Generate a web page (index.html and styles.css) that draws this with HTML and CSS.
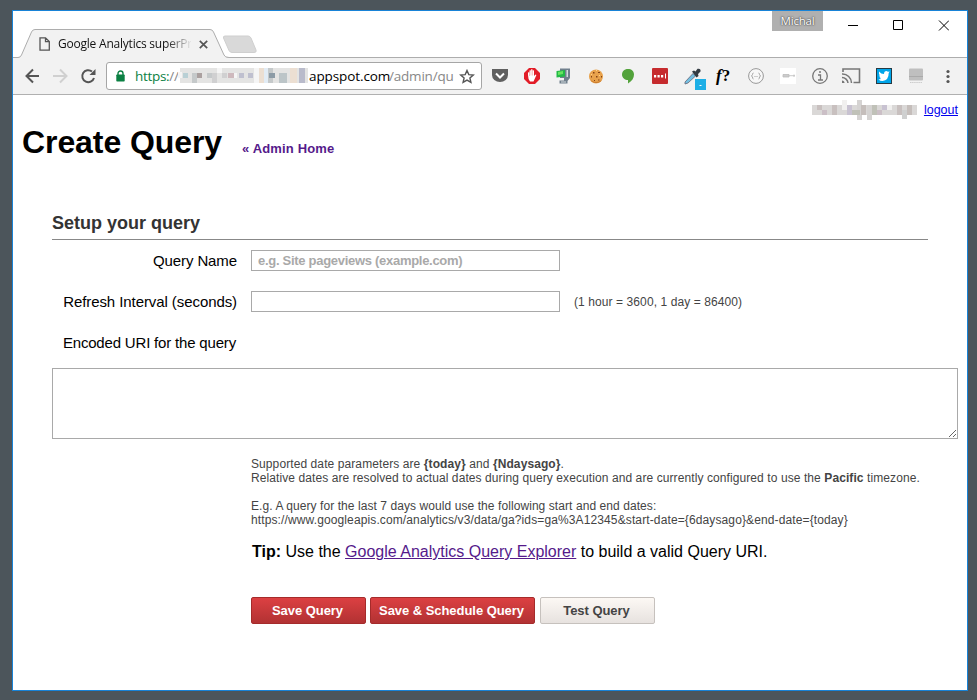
FILE: index.html
```
<!DOCTYPE html>
<html lang="en">
<head>
<meta charset="utf-8">
<title>Google Analytics superProxy</title>
<link rel="stylesheet" href="styles.css">
</head>
<body>
<div class="window">
  <header class="titlebar">
    <div class="tab">
      <svg class="tab-shape" width="216" height="30" viewBox="0 0 216 30"><path d="M0 30V28.500H5Q7.500 28.500 8.500 26L18.500 3Q19.500 .5 22 .5H197Q199.500 .5 200.500 3L211 26Q212 28.500 215 28.500H216V30Z" fill="#f2f2f2"/><path d="M0 28.500H5Q7.500 28.500 8.500 26L18.500 3Q19.500 .5 22 .5H197Q199.500 .5 200.500 3L211 26Q212 28.500 216 28.500" fill="none" stroke="#adadad"/></svg>
      <svg class="page-icon" width="12" height="14" viewBox="0 0 12 14"><path d="M1 .8H6.500L10.300 4.600V13.200H1ZM6.500 1V4.700H10" fill="none" stroke="#555" stroke-width="1.300"/></svg>
      <span class="tab-title">Google Analytics superPr</span>
      <svg class="tab-close" width="9" height="9" viewBox="0 0 9 9"><path d="M.8 .8L8.200 8.200M8.200 .8L.8 8.200" stroke="#555" stroke-width="1.700"/></svg>
    </div>
    <svg class="new-tab" width="36" height="19" viewBox="0 0 36 19"><path d="M3 1H26Q28 1 29 3L34 15Q35 17.500 32 17.500H10Q8 17.500 7 15.500L1.500 3Q1 1 3 1Z" fill="#d9d9d9" stroke="#cfcfcf"/></svg>
    <div class="profile">Michal</div>
    <svg class="controls" width="101" height="12" viewBox="0 0 101 12"><path d="M0 5.500H10M45.500 .5H54.500V9.500H45.500ZM91 .5L101 10.500M101 .5L91 10.500" fill="none" stroke="#000"/></svg>
  </header>
  <nav class="toolbar">
    <svg class="nav-icons" width="72" height="18" viewBox="0 0 72 18"><path d="M14 9H1.500M8 2.500L1.500 9L8 15.500" fill="none" stroke="#555" stroke-width="2"/><path d="M28 9H41M35 2.500L41.500 9L35 15.500" fill="none" stroke="#d0d0d0" stroke-width="2"/><path d="M69 11A6 6 0 1 1 67 4.500" fill="none" stroke="#555" stroke-width="2"/><path d="M70.500 2V8H64.500Z" fill="#555"/></svg>
    <div class="address">
      <svg width="9" height="12" viewBox="0 0 9 12"><path d="M2 5V3.500A2.400 2.400 0 0 1 7 3.500V5" fill="none" stroke="#0b8043" stroke-width="1.400"/><rect x=".3" y="4.500" width="8.400" height="7" rx=".7" fill="#0b8043"/></svg>
      <div class="origin"><span class="scheme">https:</span><span class="path">//</span></div>
      <svg class="host-mask" width="130" height="16" viewBox="0 0 130 16" shape-rendering="crispEdges"><path d="M2 0h128v15h-128z" fill="#e4e4e3"/><path d="M0 4h4v6h-4zM54 5h5v5h-5zM76 0h5v15h-5zM39 0h5v5h-5z" fill="#f5f5f5"/><path d="M5 5h5v5h-5z" fill="#b9d0d5"/><path d="M14 5h5v10h-5zM29 5h5v5h-5zM90 0h5v15h-5z" fill="#c5c9ca"/><path d="M19 5h5v5h-5z" fill="#aaa09f"/><path d="M34 5h5v10h-5zM44 5h5v5h-5z" fill="#d0d0d1"/><path d="M50 5h6v5h-6z" fill="#ceb9bd"/><path d="M61 5h5v5h-5zM70 5h5v5h-5z" fill="#bfc0cf"/><path d="M81 0h5v15h-5zM112 0h7v15h-7z" fill="#ecdfd2"/><path d="M86 0h4v15h-4z" fill="#e2ecf5"/><path d="M91 5h6v5h-6z" fill="#8c9ba6"/><path d="M101 5h8v10h-8z" fill="#bcc5c8"/><path d="M121 0h6v15h-6z" fill="#b9bbcb"/></svg>
      <span class="domain">appspot.com</span><span class="path path-end">/admin/qu</span>
      <svg class="star" width="16" height="15" viewBox="0 0 16 15"><path d="M8 1.500L9.800 5.600L14.300 6L10.900 9L11.900 13.400L8 11.100L4.100 13.400L5.100 9L1.700 6L6.200 5.600Z" fill="none" stroke="#555" stroke-width="1.400"/></svg>
    </div>
    <div class="extensions">
      <svg width="18" height="18" viewBox="0 0 18 18"><path d="M1 2H17V8A8 7 0 0 1 1 8Z" fill="#606060"/><path d="M5 6.500L9 10.500L13 6.500" fill="none" stroke="#fff" stroke-width="2"/></svg>
      <svg width="18" height="18" viewBox="0 0 18 18"><path d="M6 1H12L17 6V12L12 17H6L1 12V6Z" fill="#e21c27"/><path d="M5 8V5.500Q6 4.800 6.500 5.500V3.500Q7.500 2.800 8 3.500V2.500Q9 1.800 9.500 2.500V3.500Q10.500 2.800 11 3.500V9L12.500 7.500Q14 7.500 13 9L10.500 14.500H7Q5 12 5 8Z" fill="#fff"/><path d="M6.500 5V9M8 3V8.500M9.500 3V8.500" stroke="#e88" stroke-width=".5"/></svg>
      <svg width="18" height="18" viewBox="0 0 18 18"><path d="M5 1.500H15V11L12.500 14V16.500H4.500V13.500H9V11H5Z" fill="#71808d"/><path d="M11.500 3H13V10H11.500ZM6 14.500H11V15.500H6Z" fill="#d5dce0"/><path d="M1.500 4L10 3V9.500L1.500 10.500Z" fill="#22b947"/><path d="M3 5L8 4V7L3 8Z" fill="#68e560"/></svg>
      <svg width="18" height="18" viewBox="0 0 18 18"><circle cx="9" cy="9.500" r="7" fill="#e8a24c"/><path d="M3.500 13A7 7 0 0 0 15 13Q9 17 3.500 13" fill="#c8792d"/><path d="M6 5h1.500v1.500h-1.500zM11 5h2v1h-2zM4 9h1v1.500h-1zM9 9h1.500v1.500h-1.500zM14 9h1v1.500h-1zM7 13h1v1h-1zM11 12.500h1.500v1h-1.500z" fill="#824214"/><path d="M4 7h1v1h-1zM9 3h1v1h-1zM12 8h1v1h-1z" fill="#ffd28b"/></svg>
      <svg width="18" height="18" viewBox="0 0 18 18"><path d="M9 2C5 2 3 4.500 3 7.500C3 11 6 13 9 13V16.500C13 14 15 11 15 7.500C15 4 12.500 2 9 2Z" fill="#53a33c"/></svg>
      <svg width="18" height="18" viewBox="0 0 18 18"><rect x="1" y="1" width="16" height="16" rx="1" fill="#c62b2e"/><path d="M3 8h2.200v2.500h-2.200zM6.500 8h2.200v2.500h-2.200zM10 8h2.200v2.500h-2.200zM14 6.500h1v5h-1z" fill="#fff"/></svg>
      <svg class="picker" width="24" height="24" viewBox="0 0 24 24"><path d="M2 15L10 6.500L12.500 9L5 16L2 17Z" fill="#73c0e2" stroke="#667" stroke-width=".8"/><path d="M9 4.500L11 3.500L12.500 4.500L14.500 1.800Q18 1 17.500 4.500L15 7L15.500 9L13.500 10.500Z" fill="#333c43"/><rect x="12" y="12" width="11" height="11" fill="#1eafe6"/><path d="M16.500 18.500h2" stroke="#fff"/></svg>
      <span class="fquestion"><i>f</i>?</span>
      <svg width="18" height="18" viewBox="0 0 18 18"><circle cx="9" cy="9" r="7.400" fill="#f7f7f7" stroke="#999"/><path d="M6.500 6Q5.500 6 5.500 7.500L4.500 9L5.500 10Q5.500 12 6.500 12M11.500 6Q12.500 6 12.500 7.500L13.500 9L12.500 10Q12.500 12 11.500 12M7.500 9.500H8.500M9.500 9.500H10.500" fill="none" stroke="#999" stroke-width=".9"/></svg>
      <svg width="18" height="18" viewBox="0 0 18 18"><rect x="1" y="1" width="16" height="16" fill="#fff"/><path d="M4 7.500H10V10H4ZM10 8.700H16M15 7.500V10" fill="#ccc" stroke="#bbb" stroke-width=".8"/></svg>
      <svg width="18" height="18" viewBox="0 0 18 18"><circle cx="9" cy="9" r="7.300" fill="none" stroke="#777" stroke-width="1.300"/><path d="M7 8H9.500V13M7 13H12" fill="none" stroke="#777" stroke-width="1.300"/><circle cx="9" cy="5" r="1" fill="#777"/></svg>
      <svg class="cast" width="20" height="18" viewBox="0 0 20 18"><path d="M2 5V2H18.500V15.500H12.500" fill="none" stroke="#777" stroke-width="1.600"/><path d="M1 7A9 9 0 0 1 10.500 16M1 10.500A6 6 0 0 1 7 16" fill="none" stroke="#777" stroke-width="1.500"/><path d="M1 13.500A2.500 2.500 0 0 1 3.500 16H1Z" fill="#777"/></svg>
      <svg width="18" height="18" viewBox="0 0 18 18"><rect x="1.500" y="1.500" width="15" height="15" fill="#00a5e9" stroke="#263a43"/><path d="M4 4.500Q6 7 9 7Q9 4 11.500 4L13 4.700L14.700 4.500L13.700 6Q13.700 13.500 7.500 14Q5 14 3.500 12.500L6 12L4.500 10.500H5.500L3.700 8.500H5Q3.500 7 4 4.500Z" fill="#fff"/></svg>
      <svg width="18" height="18" viewBox="0 0 18 18"><rect x="2" y="1.500" width="14" height="12" rx="1" fill="#bfbfbf"/><path d="M2 9.500H16" stroke="#aaa"/><path d="M3 15.500H15" stroke="#ccc" stroke-dasharray="1.500 .6"/></svg>
      <svg class="menu" width="6" height="18" viewBox="0 0 6 18"><g fill="#555"><circle cx="3" cy="4.500" r="1.600"/><circle cx="3" cy="9.500" r="1.600"/><circle cx="3" cy="14.500" r="1.600"/></g></svg>
    </div>
  </nav>
  <main class="page">
    <div class="account">
      <svg width="105" height="20" viewBox="0 0 105 20" shape-rendering="crispEdges"><path d="M0 5h105v10h-105z" fill="#dad8d7"/><path d="M5 5h5v5h-5zM20 5h5v10h-5zM85 5h5v10h-5z" fill="#c8c0bf"/><path d="M10 10h5v5h-5zM62 10h8v5h-8z" fill="#cbbfc6"/><path d="M35 5h5v10h-5zM70 5h5v5h-5z" fill="#c8c2d1"/><path d="M45 0h5v20h-5zM55 5h5v15h-5z" fill="#d5d3d2"/><path d="M40 10h8v5h-8zM60 5h5v10h-5z" fill="#c0c1b8"/><path d="M49 5h5v10h-5zM95 5h5v10h-5z" fill="#c5bebb"/><path d="M75 5h5v5h-5zM30 0h5v10h-5z" fill="#f1f0ef"/><path d="M90 10h5v9h-5z" fill="#cfd0d0"/></svg>
      <a class="logout" href="#">logout</a>
    </div>
    <div class="heading"><h1>Create Query</h1><a href="#">« Admin Home</a></div>
    <form class="query-form">
      <h2>Setup your query</h2>
      <div class="row"><label class="name-label" for="name">Query Name</label><input id="name" placeholder="e.g. Site pageviews (example.com)"></div>
      <div class="row"><label for="interval">Refresh Interval (seconds)</label><input id="interval"><span class="hint">(1 hour = 3600, 1 day = 86400)</span></div>
      <div class="row"><label class="uri-label" for="uri">Encoded URI for the query</label></div>
      <textarea id="uri"></textarea>
      <div class="notes">
        <p>Supported date parameters are <b>{today}</b> and <b>{Ndaysago}</b>.</p>
        <p>Relative dates are resolved to actual dates during query execution and are currently configured to use the <b>Pacific</b> timezone.</p>
        <p class="example">E.g. A query for the last 7 days would use the following start and end dates:</p>
        <p class="sample-url">https://www.googleapis.com/analytics/v3/data/ga?ids=ga%3A12345&amp;start-date={6daysago}&amp;end-date={today}</p>
      </div>
      <p class="tip"><b>Tip:</b> Use the <a href="#">Google Analytics Query Explorer</a> to build a valid Query URI.</p>
      <div class="actions"><button type="button" class="save">Save Query</button><button type="button" class="save schedule">Save &amp; Schedule Query</button><button type="button">Test Query</button></div>
    </form>
  </main>
</div>
</body>
</html>
```
FILE: styles.css
```
* { box-sizing: border-box; }
body { margin: 0; height: 700px; padding: 10px 9px 9px 12px; overflow: hidden; background: #4c555b; font-family: "Liberation Sans", Arial, sans-serif; color: #000; }
svg { display: block; flex: none; }
.window { height: 681px; border: 1px solid #1883d7; background: #fff; }

.titlebar { position: relative; display: flex; height: 47px; padding-top: 18px; border-bottom: 1px solid #adadad; }
.tab { position: relative; z-index: 1; display: flex; align-items: center; width: 216px; height: 30px; padding-left: 26px; }
.tab-shape { position: absolute; left: 0; top: 0; }
.page-icon { position: relative; }
.tab-title { position: relative; width: 133px; margin-left: 7px; font: 12px/20px "Open Sans", sans-serif; letter-spacing: -.22px; white-space: nowrap; overflow: hidden; background: linear-gradient(to right, #111 108px, #ddd 132px); background-clip: text; color: transparent; }
.tab-close { position: relative; margin-left: 8px; }
.new-tab { margin: 6px 0 0 -7px; }
.profile { position: absolute; left: 759px; top: 0; width: 51px; height: 20px; background: #b0b0b0; color: #fff; font: 11.500px/20px "Open Sans", sans-serif; letter-spacing: -.2px; text-align: center; text-shadow: 0 0 2px #333, 0 0 1px #555; }
.controls { position: absolute; left: 835px; top: 9px; }

.toolbar { display: flex; align-items: center; height: 37px; padding-left: 12px; background: #f2f2f2; border-bottom: 1px solid #b0b0b0; }
.address { display: flex; align-items: center; width: 376px; height: 28px; margin-left: 9px; padding-left: 9px; border: 1px solid #a6a6a6; border-radius: 3px; background: #fff; font: 13.500px/20px "Open Sans", sans-serif; white-space: nowrap; }
.origin { width: 43px; margin-left: 10px; letter-spacing: -.3px; }
.scheme { color: #0b8043; }
.path { color: #888; }
.host-mask { margin-right: 1px; }
.domain { width: 80px; letter-spacing: -.1px; }
.path-end { width: 66px; letter-spacing: -.2px; }
.star { margin-left: 4px; }
.extensions { display: flex; align-items: center; margin-left: 9px; gap: 14px; }
.picker { margin: 5px -6px 0 0; }
.fquestion { width: 18px; padding-left: 1px; font: bold 17px/18px "Liberation Serif", serif; white-space: nowrap; }
.cast { margin-left: -2px; }
.menu { margin-left: 6px; }

.account { display: flex; justify-content: flex-end; align-items: center; height: 20px; margin-top: 5px; padding-right: 9px; font-size: 12.500px; }
.account a { margin-left: 7px; color: #00e; }
.heading { display: flex; align-items: baseline; height: 38px; margin: 3px 0 0 9px; }
h1 { margin: 0; font-size: 32px; line-height: 38px; letter-spacing: -.08px; }
.heading a { margin-left: 20px; color: #551a8b; font-size: 13px; font-weight: bold; letter-spacing: .15px; text-decoration: none; }
.query-form { margin: 48px 8px 0 39px; }
h2 { width: 876px; height: 31px; margin: 0 0 10px; padding-top: 1px; border-bottom: 1px solid #888; color: #333; font-size: 18px; line-height: 27px; }
.row { display: flex; align-items: center; height: 21px; margin-bottom: 20px; }
label { width: 185px; margin-right: 14px; text-align: right; font-size: 15px; letter-spacing: -.08px; white-space: nowrap; }
.name-label { letter-spacing: -.1px; }
.uri-label { padding-right: 1px; letter-spacing: -.18px; }
input { width: 309px; height: 21px; padding: 1px 6px; border: 1px solid #a9a9a9; font: bold 13px "Liberation Sans", Arial, sans-serif; }
input::placeholder { color: #a9a9a9; opacity: 1; letter-spacing: -.29px; }
.hint { margin-left: 14px; color: #444; font-size: 12px; letter-spacing: .09px; }
textarea { display: block; width: 906px; height: 71px; margin-top: -5px; border: 1px solid #a9a9a9; resize: both; }
.notes { margin: 18px 0 0 199px; color: #444; font-size: 12px; line-height: 14px; letter-spacing: .09px; white-space: nowrap; }
p { margin: 0; }
.example { margin-top: 14px; letter-spacing: .075px; }
.sample-url { letter-spacing: .12px; }
.tip { margin: 15px 0 0 200px; font-size: 16px; line-height: 20px; white-space: nowrap; }
.tip a { color: #551a8b; }
.actions { display: flex; gap: 5px; margin: 35px 0 0 199px; }
button { width: 115px; height: 27px; padding: 0 2px 0 0; border: 1px solid #c6c1bd; border-radius: 2px; background: linear-gradient(#fcf8f4, #e7e2df); color: #444; font: bold 13px "Liberation Sans", Arial, sans-serif; letter-spacing: -.05px; white-space: nowrap; }
.save { border-color: #a52b2b; background: linear-gradient(#dc4042, #b23233); color: #fff; }
.schedule { width: 165px; margin-left: -1px; }
```
